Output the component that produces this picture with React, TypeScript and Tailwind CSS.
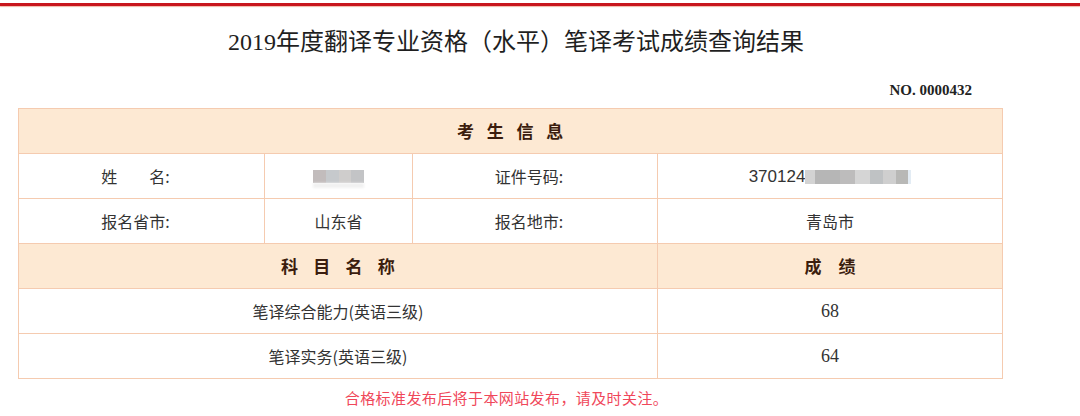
import React from "react";

const cell = "border border-[#f5cbb0] text-center align-middle";
const label = `${cell} pr-[12px]`;

const Redacted = ({ w }: { w: number }) => (
  <span className="inline-flex flex-col align-middle" style={{ width: w }}>
    <span className="flex h-[13px]">
      <span className="flex-1 bg-[#c2bcbc]" />
      <span className="flex-1 bg-[#c6c9cc]" />
      <span className="flex-1 bg-[#cfcdcc]" />
      <span className="flex-1 bg-[#c3c4c6]" />
    </span>
    <span className="h-[5px] bg-[#f1f1f1] blur-[1px]" />
  </span>
);

const IdRedacted = () => (
  <span className="inline-flex h-[14px] w-[106px] align-[-2px]">
    <span className="w-[10px] bg-[#d3d3d3]" />
    <span className="w-[25px] bg-[#b6b6b6]" />
    <span className="w-[15px] bg-[#bdbcbc]" />
    <span className="w-[15px] bg-[#d5d5d5]" />
    <span className="w-[13px] bg-[#bfc2c4]" />
    <span className="w-[13px] bg-[#cfcfcf]" />
    <span className="w-[12px] bg-[#b8b8b6]" />
    <span className="w-[3px] bg-[#e3ecf4]" />
  </span>
);

export default function App() {
  return (
    <div className="w-[1080px] h-[416px] bg-white overflow-hidden font-['Noto_Sans_CJK_SC',sans-serif] text-[#333]">
      <div className="pt-[3px]">
        <div className="h-[3px] bg-[#c8161d] shadow-[0_1px_1px_#f1b8a8]" />
      </div>

      <h1 className="mt-[20px] pr-[48px] text-center text-[24px] leading-[32px] text-[#1f1f1f] font-['Liberation_Serif','Noto_Sans_CJK_SC',serif]">
        2019年度翻译专业资格（水平）笔译考试成绩查询结果
      </h1>

      <div className="mt-[22px] pr-[108px] text-right text-[15px] leading-[20px] font-bold text-[#222] font-['Liberation_Serif',serif]">
        NO. 0000432
      </div>

      <table className="mt-[8px] ml-[18px] w-[984px] border-collapse table-fixed text-[16px]">
        <colgroup>
          <col className="w-[246px]" />
          <col className="w-[148px]" />
          <col className="w-[245px]" />
          <col className="w-[345px]" />
        </colgroup>
        <tbody>
          <tr className="h-[45px] bg-[#fde9d3]">
            <td colSpan={4} className={`${cell} font-bold text-[17px] text-[#3b1d0e] tracking-[0.75em] pl-[12px]`}>
              考生信息
            </td>
          </tr>
          <tr className="h-[45px]">
            <td className={label}>
              姓<span className="inline-block w-[32px]" />名:
            </td>
            <td className={cell}>
              <Redacted w={51} />
            </td>
            <td className={label}>证件号码:</td>
            <td className={cell}>
              <span className="font-['Liberation_Sans',sans-serif] text-[17px]">370124</span>
              <IdRedacted />
            </td>
          </tr>
          <tr className="h-[45px]">
            <td className={label}>报名省市:</td>
            <td className={cell}>山东省</td>
            <td className={label}>报名地市:</td>
            <td className={cell}>青岛市</td>
          </tr>
          <tr className="h-[45px] bg-[#fde9d3]">
            <td colSpan={3} className={`${cell} font-bold text-[17px] text-[#3b1d0e] tracking-[0.9em] pl-[15px]`}>
              科目名称
            </td>
            <td className={`${cell} font-bold text-[17px] text-[#3b1d0e] tracking-[1em] pl-[17px]`}>
              成绩
            </td>
          </tr>
          <tr className="h-[45px]">
            <td colSpan={3} className={cell}>
              笔译综合能力(英语三级)
            </td>
            <td className={`${cell} font-['Liberation_Serif',serif] text-[18px]`}>68</td>
          </tr>
          <tr className="h-[45px]">
            <td colSpan={3} className={cell}>
              笔译实务(英语三级)
            </td>
            <td className={`${cell} font-['Liberation_Serif',serif] text-[18px]`}>64</td>
          </tr>
        </tbody>
      </table>

      <p className="mt-[10px] w-[1013px] text-center text-[15px] tracking-[0.4px] leading-[20px] text-[#f0475a] font-['Liberation_Serif','Noto_Sans_CJK_SC',serif]">
        合格标准发布后将于本网站发布，请及时关注。
      </p>
    </div>
  );
}
